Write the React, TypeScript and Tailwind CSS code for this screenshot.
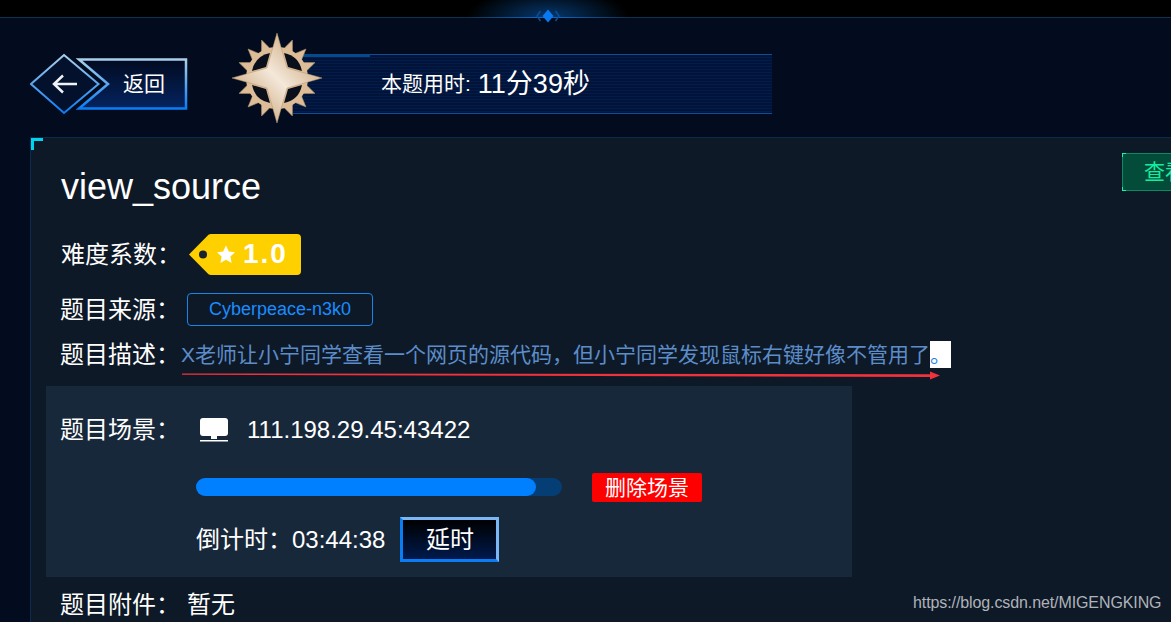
const FONT = "font-['Liberation_Sans','Noto_Sans_CJK_SC',sans-serif]";

// spikes around the medal, three per quadrant
const burst = (() => {
  const pts: string[] = [];
  for (let q = 0; q < 4; q++) {
    for (const a of [22, 45, 68]) {
      const t = q * 90 + a;
      [[t - 9, 30], [t, 41], [t + 9, 30]].forEach(([d, r]) => {
        const rad = (d * Math.PI) / 180;
        pts.push(`${(45 + r * Math.cos(rad)).toFixed(1)},${(45 + r * Math.sin(rad)).toFixed(1)}`);
      });
    }
  }
  return pts.join(' ');
})();

function Medal() {
  return (
    <svg width="90" height="92" viewBox="0 0 90 92" className="relative z-10 mb-[12px] shrink-0">
      <defs>
        <linearGradient id="gold" x1="0" y1="1" x2="1" y2="0">
          <stop offset="0.15" stopColor="#cba67a" />
          <stop offset="0.5" stopColor="#f4e8da" />
          <stop offset="0.85" stopColor="#cba67a" />
        </linearGradient>
      </defs>
      <g transform="translate(0 1)">
        <polygon points={burst} fill="#dcbd97" stroke="#a88c66" strokeWidth="0.6" />
        <circle cx="45" cy="45" r="31" fill="#dcbd97" />
        <g fill="#0a0f1c">
          <path d="M20 38 Q23 23 38 20 L34 34 Z" />
          <path d="M70 38 Q67 23 52 20 L56 34 Z" />
          <path d="M20 52 Q23 67 38 70 L34 56 Z" />
          <path d="M70 52 Q67 67 52 70 L56 56 Z" />
        </g>
        <polygon
          points="45,0 55,35 90,45 55,55 45,90 35,55 0,45 35,35"
          fill="url(#gold)"
          stroke="#b5966c"
          strokeWidth="0.5"
        />
      </g>
    </svg>
  );
}

function BackButton() {
  return (
    <div className="relative h-[62px] w-[160px] shrink-0">
      <svg width="160" height="62" viewBox="0 0 160 62" className="absolute inset-0">
        <defs>
          <linearGradient id="edge" x1="0" y1="0" x2="0" y2="1">
            <stop offset="0" stopColor="#a9d0ea" />
            <stop offset="1" stopColor="#0a7df5" />
          </linearGradient>
          <linearGradient id="fill" x1="0" y1="0" x2="0" y2="1">
            <stop offset="0" stopColor="#020a20" />
            <stop offset="1" stopColor="#04245f" />
          </linearGradient>
        </defs>
        <path d="M49 6.500H156V55.500H49L78 31Z" fill="url(#fill)" stroke="url(#edge)" strokeWidth="2.500" />
        <path d="M34 2L68.500 31L34 60L1 31Z" fill="#03112c" stroke="url(#edge)" strokeWidth="2" />
        <path d="M47 31H23.500M33 22.500L24 31L33 39.500" fill="none" stroke="#f0f2f5" strokeWidth="2.500" />
      </svg>
      <span className="absolute left-[93px] top-[18px] text-[21px] leading-[26px] text-white">返回</span>
    </div>
  );
}

function DifficultyTag() {
  return (
    <div className="relative h-[41px] w-[113px] shrink-0">
      <svg width="113" height="41" viewBox="0 0 113 41" className="absolute inset-0">
        <path d="M0 20.500L19.500 0.800Q20.500 0 22 0H108Q112 0 112 4V37Q112 41 108 41H22Q20.500 41 19.500 40.200Z" fill="#ffd000" />
        <circle cx="14" cy="20.500" r="4" fill="#1a2230" />
        <polygon
          points="37,11.500 39.800,17.500 46,18.300 41.400,22.600 42.600,29 37,25.800 31.400,29 32.600,22.600 28,18.300 34.200,17.500"
          fill="#fff"
        />
      </svg>
      <span className="absolute left-[54px] top-[3px] text-[28px] font-bold leading-[34px] tracking-[2px] text-white">
        1.0
      </span>
    </div>
  );
}

function Label({ children }: { children: string }) {
  return <span className="shrink-0 text-[24px] leading-[30px] text-white">{children}</span>;
}

export default function App() {
  return (
    <div className={`${FONT} relative h-[622px] w-full overflow-hidden bg-[#030b1f]`}>
      {/* top strip */}
      <div className="relative h-[18px] border-b border-[#0d3352] bg-black">
        <div className="absolute left-[468px] top-0 h-[17px] w-[160px] bg-[radial-gradient(50%_170%_at_50%_100%,#06386e,#000000)]" />
        <div className="absolute left-[470px] top-[17px] h-px w-[156px] bg-[linear-gradient(90deg,#0d3352,#0f6fd0,#0d3352)]" />
        <svg width="26" height="18" viewBox="0 0 26 18" className="absolute left-[535px] top-[7px]">
          <path d="M13 2.500L18.500 9L13 15.500L7.500 9Z" fill="#0a78ee" />
          <path d="M5.500 4L2 9L5.500 14M20.500 4L24 9L20.500 14" fill="none" stroke="#0a4f99" strokeWidth="1.500" />
        </svg>
      </div>

      {/* header */}
      <div className="flex h-[119px] items-center pl-[30px] pt-[12px]">
        <BackButton />
        <div className="ml-[42px] flex items-center">
          <Medal />
          <div className="relative -ml-[29px] flex h-[60px] w-[479px] items-center border-y border-[#0a4f96] bg-[repeating-linear-gradient(180deg,#011338_0px,#011338_2px,#021d4a_2px,#021d4a_3px)] pl-[88px]">
            <div className="absolute -top-px left-0 h-[3px] w-[77px] bg-[#064a8c]" />
            <span className="text-[21px] leading-[30px] text-white">本题用时:</span>
            <span className="ml-[7px] text-[27px] leading-[30px] text-white">11分39秒</span>
          </div>
        </div>
      </div>

      {/* challenge card */}
      <div className="relative ml-[30px] w-[1200px] border-l border-t border-[#0c2a4c] bg-[#0e1927] pb-[20px] pt-[27px]">
        <div className="absolute left-0 top-0 h-[12px] w-[12px] border-l-[3px] border-t-[3px] border-[#00d5ee]" />

        <div className="flex h-[44px] items-center justify-between pl-[30px]">
          <h1 className="text-[36px] font-normal leading-[44px] text-white">view_source</h1>
          <div className="relative -mt-[30px] flex h-[38px] w-[108px] items-center border border-[#0c8a62] bg-[#044c3a] pl-[21px] text-[21px] text-[#12eea0]">
            <span className="absolute -left-px -top-px h-[4px] w-[4px] border-l border-t border-[#17f5a8]" />
            <span className="absolute -bottom-px -left-px h-[4px] w-[4px] border-b border-l border-[#17f5a8]" />
            查看提示
          </div>
        </div>

        <div className="mt-[25px] flex h-[41px] items-center pl-[30px]">
          <Label>难度系数：</Label>
          <div className="ml-[8px]">
            <DifficultyTag />
          </div>
        </div>

        <div className="mt-[18px] flex h-[33px] items-center pl-[29px]">
          <Label>题目来源：</Label>
          <div className="ml-[7px] flex h-[33px] w-[186px] items-center justify-center rounded-[4px] border border-[#1b84e6] text-[18px] text-[#1a8cff]">
            Cyberpeace-n3k0
          </div>
        </div>

        <div className="mt-[15px] flex h-[27px] items-center pl-[29px]">
          <Label>题目描述：</Label>
          <p className="ml-[1px] flex h-[27px] items-center whitespace-nowrap text-[21px] text-[#5c8dc9]">
            X老师让小宁同学查看一个网页的源代码，但小宁同学发现鼠标右键好像不管用了
            <span className="h-[27px] w-[21px] bg-white text-[21px] leading-[27px] text-[#1a7fe6]">。</span>
          </p>
        </div>

        <div className="ml-[15px] mt-[18px] h-[191px] w-[806px] bg-[#18283b] pl-[14px]">
          <div className="flex h-[30px] translate-y-[29px] items-center">
            <Label>题目场景：</Label>
            <svg width="30" height="26" viewBox="0 0 30 26" className="ml-[19px] shrink-0">
              <rect x="1" y="1" width="28" height="18" rx="3" fill="#fff" />
              <rect x="12" y="19" width="6" height="3" fill="#fff" />
              <rect x="1" y="23" width="28" height="1.500" fill="#fff" />
            </svg>
            <span className="ml-[18px] text-[24px] leading-[30px] text-white">111.198.29.45:43422</span>
          </div>
          <div className="mt-[57px] flex h-[29px] items-center pl-[136px]">
            <div className="mb-[1px] h-[18px] w-[366px] rounded-full bg-[#053e75]">
              <div className="h-full w-[340px] rounded-full bg-[#007fff]" />
            </div>
            <div className="ml-[30px] flex h-[29px] w-[110px] items-center justify-center rounded-[2px] bg-[#ff0000] text-[21px] text-white">
              删除场景
            </div>
          </div>
          <div className="mt-[15px] flex h-[45px] items-center pl-[136px]">
            <span className="text-[24px] leading-[30px] text-white">倒计时：</span>
            <span className="text-[24px] leading-[30px] text-white">03:44:38</span>
            <div className="ml-[15px] flex h-[45px] w-[99px] items-center justify-center border-[3px] border-[#0a7df5] border-r-[#7ab8f5] border-t-[#7ab8f5] bg-[linear-gradient(180deg,#000000,#001a4c)] text-[24px] text-white">
              延时
            </div>
          </div>
        </div>

        <div className="mt-[13px] flex h-[30px] items-center pl-[29px]">
          <Label>题目附件：</Label>
          <span className="ml-[7px] text-[24px] leading-[30px] text-white">暂无</span>
        </div>

        {/* hand drawn marker under the description */}
        <svg width="760" height="12" viewBox="0 0 760 12" className="absolute left-[150px] top-[231px]">
          <path d="M1 4.500L750 5.200V8L1 5.800Z" fill="#f0323c" />
          <path d="M749 2.500L759 6.500L749 10.500Z" fill="#f0323c" />
        </svg>
      </div>

      <span className="absolute left-[913px] top-[593px] text-[16px] leading-[20px] tracking-[-0.1px] text-[#aeb3ba]">
        https://blog.csdn.net/MIGENGKING
      </span>
    </div>
  );
}
